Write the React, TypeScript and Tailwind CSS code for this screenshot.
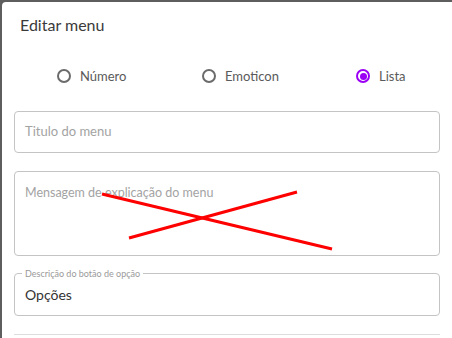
import React from "react";

const font = { fontFamily: "Lato, 'Noto Sans', sans-serif" };

function Radio({ label, checked }: { label: string; checked?: boolean }) {
  return (
    <label className="flex items-center gap-[9px]">
      {checked ? (
        <span className="flex h-[14px] w-[14px] items-center justify-center rounded-full border-2 border-[#9b00f5]">
          <span className="h-[7px] w-[7px] rounded-full bg-[#9b00f5]" />
        </span>
      ) : (
        <span className="h-[14px] w-[14px] rounded-full border-2 border-[#6b6b6b]" />
      )}
      <span className="text-[13px] leading-5 text-[#5a5a5a]">{label}</span>
    </label>
  );
}

export default function App() {
  return (
    <div
      className="relative h-[338px] w-[452px] overflow-hidden bg-[#5e5e5e] pl-[2px] pt-[2px]"
      style={font}
    >
      <div className="h-[400px] w-[452px] rounded-tl-[4px] bg-white">
        <h2 className="pl-[18px] pt-[12px] text-[16px] leading-[22px] text-[#3a3a3a]">
          Editar menu
        </h2>

        <div className="mt-[30px] grid h-5 grid-cols-[145px_154px_1fr] pl-[55px]">
          <Radio label="Número" />
          <Radio label="Emoticon" />
          <Radio label="Lista" checked />
        </div>

        <div className="mx-[12px] w-[426px]">
          <div className="mt-[25px] flex h-[42px] items-center rounded-[4px] border border-[#c4c4c4] px-[10px]">
            <span className="text-[13px] text-[#a3a3a3]">Titulo do menu</span>
          </div>

          <div className="mt-[18px] h-[85px] rounded-[4px] border border-[#c4c4c4] px-[10px] pt-[7px]">
            <span className="text-[12.5px] leading-[18px] text-[#a3a3a3]">
              Mensagem de explicação do menu
            </span>
          </div>

          <div className="relative mt-[17px] flex h-[43px] items-center rounded-[4px] border border-[#c4c4c4] px-[10px]">
            <span className="absolute -top-[6px] left-[7px] bg-white px-[3px] text-[9px] leading-[11px] text-[#9a9a9a]">
              Descrição do botão de opção
            </span>
            <span className="text-[14px] text-[#333]">Opções</span>
          </div>

          <div className="mt-[18px] h-px bg-[#dedede]" />
        </div>
      </div>

      <svg
        className="pointer-events-none absolute inset-0"
        width="452"
        height="338"
        viewBox="0 0 452 338"
      >
        <line x1="102" y1="194" x2="332" y2="249" stroke="#ff0000" strokeWidth="3" />
        <line x1="129" y1="238" x2="297" y2="192" stroke="#ff0000" strokeWidth="3" />
      </svg>
    </div>
  );
}
